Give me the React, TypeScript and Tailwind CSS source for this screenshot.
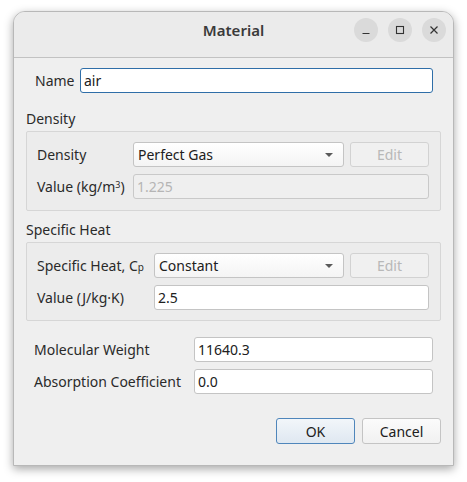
import React from 'react';

const FONT = '"Noto Sans", "Open Sans", sans-serif';

const Field = ({ value, disabled = false, focused = false, className = '' }: { value: string; disabled?: boolean; focused?: boolean; className?: string }) => (
  <div
    className={`h-[25px] flex items-center px-[3px] rounded-[3px] border text-[14px] ${
      focused ? 'border-[#2f6ea8] bg-white text-[#202020]' : disabled ? 'border-[#c9c9c9] bg-[#efefef] text-[#b5b5b5]' : 'border-[#c4c4c4] bg-white text-[#202020]'
    } ${className}`}
  >
    {value}
  </div>
);

const Combo = ({ value, className = '' }: { value: string; className?: string }) => (
  <div className={`h-[25px] flex items-center justify-between pl-[4px] pr-[10px] rounded-[3px] border border-[#c4c4c4] bg-gradient-to-b from-white to-[#f4f4f4] text-[14px] text-[#202020] ${className}`}>
    <span>{value}</span>
    <svg width="8" height="4" viewBox="0 0 8 4">
      <path d="M0 0 L8 0 L4 4 Z" fill="#5a5a5a" />
    </svg>
  </div>
);

const EditButton = () => (
  <div className="w-[79px] h-[25px] flex items-center justify-center rounded-[3px] border border-[#d2d2d2] bg-[#f0f0f0] text-[14px] text-[#b8b8b8]">
    Edit
  </div>
);

const TitleButton = ({ children }: { children: React.ReactNode }) => (
  <div className="w-[24px] h-[24px] rounded-full bg-[#dadada] flex items-center justify-center">{children}</div>
);

export default function App() {
  return (
    <div className="w-[467px] h-[482px] bg-white pt-[11px] pl-[13px]" style={{ fontFamily: FONT }}>
      <div className="w-[441px] h-[455px] flex flex-col rounded-t-[12px] border border-[#b8b8b8] bg-[#efefef] shadow-[0_3px_10px_rgba(0,0,0,0.35)] overflow-hidden">
        {/* title bar */}
        <div className="h-[46px] flex items-center pb-[9px] bg-[#ebebeb] border-b border-[#c2c2c2] relative shrink-0">
          <div className="flex-1 text-center text-[15px] font-semibold text-[#3a3a3a]">Material</div>
          <div className="absolute right-[7px] top-[6px] flex gap-[10px]">
            <TitleButton>
              <svg width="10" height="10" viewBox="0 0 10 10">
                <path d="M1.5 8.5 H8.5" stroke="#333" strokeWidth="1.2" />
              </svg>
            </TitleButton>
            <TitleButton>
              <svg width="10" height="10" viewBox="0 0 10 10">
                <rect x="1.5" y="1.5" width="7" height="7" fill="none" stroke="#333" strokeWidth="1.1" />
              </svg>
            </TitleButton>
            <TitleButton>
              <svg width="10" height="10" viewBox="0 0 10 10">
                <path d="M1.5 1.5 L8.5 8.5 M8.5 1.5 L1.5 8.5" stroke="#333" strokeWidth="1.2" />
              </svg>
            </TitleButton>
          </div>
        </div>

        {/* body */}
        <div className="flex flex-col px-[12px] pt-[10px] text-[14px] text-[#2a2a2a]">
          <div className="flex items-center pl-[9px] pr-[8px]">
            <span className="w-[45px]">Name</span>
            <Field value="air" focused className="flex-1" />
          </div>

          <div className="mt-[15px] h-[20px] flex items-center">Density</div>
          <div className="mt-[3px] border border-[#d6d6d6] bg-[#ececec] rounded-[2px] pl-[10px] pr-[11px] pt-[10px] pb-[11px] flex flex-col gap-[7px]">
            <div className="flex items-center">
              <span className="w-[96px]">Density</span>
              <Combo value="Perfect Gas" className="w-[211px]" />
              <div className="ml-[6px]">
                <EditButton />
              </div>
            </div>
            <div className="flex items-center">
              <span className="w-[96px]">
                Value (kg/m<sup className="text-[9px]">3</sup>)
              </span>
              <Field value="1.225" disabled className="flex-1" />
            </div>
          </div>

          <div className="mt-[8px] h-[20px] flex items-center">Specific Heat</div>
          <div className="mt-[3px] border border-[#d6d6d6] bg-[#ececec] rounded-[2px] pl-[10px] pr-[11px] pt-[10px] pb-[10px] flex flex-col gap-[7px]">
            <div className="flex items-center">
              <span className="w-[117px]">
                Specific Heat, C<span className="text-[10px]">p</span>
              </span>
              <Combo value="Constant" className="w-[190px]" />
              <div className="ml-[6px]">
                <EditButton />
              </div>
            </div>
            <div className="flex items-center">
              <span className="w-[117px]">Value (J/kg·K)</span>
              <Field value="2.5" className="flex-1" />
            </div>
          </div>

          <div className="mt-[16px] flex flex-col gap-[7px] pl-[8px] pr-[8px]">
            <div className="flex items-center">
              <span className="w-[160px]">Molecular Weight</span>
              <Field value="11640.3" className="flex-1" />
            </div>
            <div className="flex items-center">
              <span className="w-[160px]">Absorption Coefficient</span>
              <Field value="0.0" className="flex-1" />
            </div>
          </div>

          <div className="mt-[24px] flex justify-end gap-[7px]">
            <div className="w-[79px] h-[26px] flex items-center justify-center rounded-[3px] border border-[#4f86bb] bg-gradient-to-b from-[#f2f6fa] to-[#dfe8f1] text-[#202020]">
              OK
            </div>
            <div className="w-[79px] h-[26px] flex items-center justify-center rounded-[3px] border border-[#c4c4c4] bg-gradient-to-b from-[#fbfbfb] to-[#f1f1f1] text-[#202020]">
              Cancel
            </div>
          </div>
        </div>
      </div>
    </div>
  );
}
